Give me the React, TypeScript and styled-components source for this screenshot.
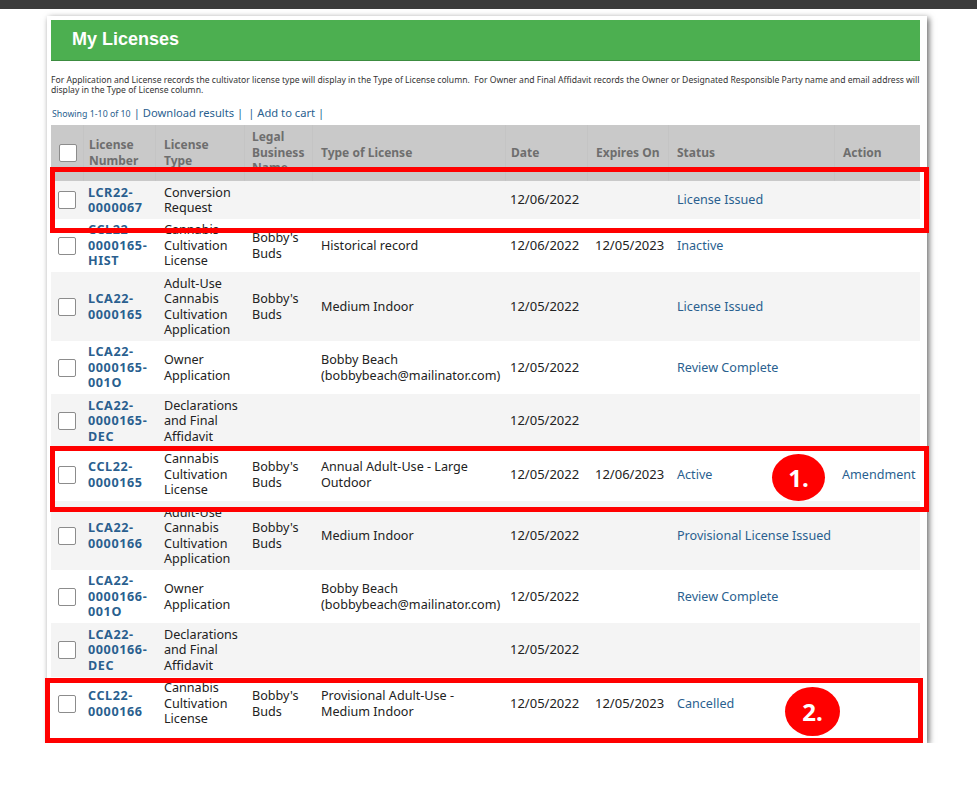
import styled, { createGlobalStyle } from 'styled-components'

const GlobalStyle = createGlobalStyle`
    html, body { margin: 0; padding: 0; background: #fff; }
    body { font-family: "Noto Sans", "Liberation Sans", sans-serif; font-size: 12.6px; color: #222; }
`
const TopBar = styled.div`
    height: 9px;
    background: #3b3b3b;
`
const Card = styled.div`
    position: relative;
    box-sizing: border-box;
    width: 880px;
    margin: 7px 0 0 47px;
    padding: 4px 7px 13px 4px;
    background: #fff;
    box-shadow: 2px 2px 6px rgba(0, 0, 0, 0.6);
`
const Banner = styled.h1`
    box-sizing: border-box;
    height: 41px;
    margin: 0;
    padding-left: 21px;
    background: #4caf50;
    border-bottom: 1px solid #3c8c40;
    color: #fff;
    font: bold 18px/38px "Liberation Sans", Arial, sans-serif;
`
const Note = styled.p`
    margin: 14px 0 0;
    font-size: 8.6px;
    line-height: 10px;
    color: #333;
`
const ResultBar = styled.div`
    display: flex;
    align-items: baseline;
    gap: 5px;
    height: 16px;
    margin: 10px 0 4px 1px;
    color: #2a5f8f;
    font-size: 11.2px;
`
const Showing = styled.span`
    font-size: 8.8px;
    margin-right: -2px;
`
const BarLink = styled.a`
    display: block;
`
const Table = styled.div`
    display: block;
`
const columns = '32px 72px 89px 68px 193px 82px 81px 166px 86px'
const HeadRow = styled.div`
    display: grid;
    grid-template-columns: ${columns};
    height: 56px;
    background: #c9c9c9;
    color: #6e6e6e;
    font-size: 12px;
    font-weight: bold;
    line-height: 15.4px;
`
const HeadCell = styled.div<{ $pad?: number }>`
    display: flex;
    align-items: center;
    overflow: hidden;
    padding-left: ${(p) => p.$pad ?? 8}px;
    padding-bottom: 1px;
    border-left: 1px solid #c4c4c4;
    box-sizing: border-box;
    &:first-child { border-left: 0; }
`
const Row = styled.div<{ $h: number; $odd: boolean }>`
    display: grid;
    grid-template-columns: ${columns};
    height: ${(p) => p.$h}px;
    background: ${(p) => (p.$odd ? '#f4f4f4' : '#fff')};
    line-height: 15.4px;
`
const Cell = styled.div<{ $pad?: number }>`
    display: flex;
    align-items: center;
    box-sizing: border-box;
    padding-left: ${(p) => p.$pad ?? 9}px;
    color: #222;
`
const DateCell = styled(Cell)`
    font-size: 13px;
`
const CheckCell = styled.div<{ $pad?: number }>`
    display: flex;
    align-items: center;
    padding-left: ${(p) => p.$pad ?? 7}px;
`
const Check = styled.span`
    display: block;
    box-sizing: border-box;
    width: 18px;
    height: 18px;
    background: #fff;
    border: 1px solid #8c8c8c;
    border-radius: 2px;
`
const Number = styled.a`
    color: #2a5f8f;
    font-size: 12.6px;
    font-weight: bold;
    letter-spacing: 0.6px;
`
const StatusLink = styled.a`
    color: #2a5f8f;
`
const Highlight = styled.div<{ $x: number; $y: number; $w: number; $h: number }>`
    position: absolute;
    box-sizing: border-box;
    left: ${(p) => p.$x}px;
    top: ${(p) => p.$y}px;
    width: ${(p) => p.$w}px;
    height: ${(p) => p.$h}px;
    border: 5.5px solid #ff0000;
`
const Marker = styled.div<{ $x: number; $y: number; $w: number; $h: number }>`
    position: absolute;
    left: ${(p) => p.$x}px;
    top: ${(p) => p.$y}px;
    width: ${(p) => p.$w}px;
    height: ${(p) => p.$h}px;
    display: flex;
    align-items: center;
    justify-content: center;
    border-radius: 50%;
    background: #ff0000;
    color: #fff;
    font: bold 24px "Open Sans", sans-serif;
`

const rows = [
    { h: 38, no: 'LCR22-\n0000067', type: 'Conversion\nRequest', biz: '', lic: '', date: '12/06/2022', exp: '', status: 'License Issued', action: '' },
    { h: 53, no: 'CCL22-\n0000165-\nHIST', type: 'Cannabis\nCultivation\nLicense', biz: "Bobby's\nBuds", lic: 'Historical record', date: '12/06/2022', exp: '12/05/2023', status: 'Inactive', action: '' },
    { h: 69, no: 'LCA22-\n0000165', type: 'Adult-Use\nCannabis\nCultivation\nApplication', biz: "Bobby's\nBuds", lic: 'Medium Indoor', date: '12/05/2022', exp: '', status: 'License Issued', action: '' },
    { h: 53, no: 'LCA22-\n0000165-\n001O', type: 'Owner\nApplication', biz: '', lic: 'Bobby Beach\n(bobbybeach@mailinator.com)', date: '12/05/2022', exp: '', status: 'Review Complete', action: '' },
    { h: 54, no: 'LCA22-\n0000165-\nDEC', type: 'Declarations\nand Final\nAffidavit', biz: '', lic: '', date: '12/05/2022', exp: '', status: '', action: '' },
    { h: 53, no: 'CCL22-\n0000165', type: 'Cannabis\nCultivation\nLicense', biz: "Bobby's\nBuds", lic: 'Annual Adult-Use - Large\nOutdoor', date: '12/05/2022', exp: '12/06/2023', status: 'Active', action: 'Amendment' },
    { h: 69, no: 'LCA22-\n0000166', type: 'Adult-Use\nCannabis\nCultivation\nApplication', biz: "Bobby's\nBuds", lic: 'Medium Indoor', date: '12/05/2022', exp: '', status: 'Provisional License Issued', action: '' },
    { h: 53, no: 'LCA22-\n0000166-\n001O', type: 'Owner\nApplication', biz: '', lic: 'Bobby Beach\n(bobbybeach@mailinator.com)', date: '12/05/2022', exp: '', status: 'Review Complete', action: '' },
    { h: 54, no: 'LCA22-\n0000166-\nDEC', type: 'Declarations\nand Final\nAffidavit', biz: '', lic: '', date: '12/05/2022', exp: '', status: '', action: '' },
    { h: 53, no: 'CCL22-\n0000166', type: 'Cannabis\nCultivation\nLicense', biz: "Bobby's\nBuds", lic: 'Provisional Adult-Use -\nMedium Indoor', date: '12/05/2022', exp: '12/05/2023', status: 'Cancelled', action: '' },
]

const lines = (text: string) =>
    text.split('\n').map((l, i) => (
        <span key={i}>
            {i > 0 && <br />}
            {l}
        </span>
    ))

function App() {
    return (
        <>
            <GlobalStyle />
            <TopBar />
            <Card>
                <Banner>My Licenses</Banner>
                <Note>
                    For Application and License records the cultivator license type will display in the Type of License column.&nbsp; For Owner and Final Affidavit records the Owner or Designated Responsible Party name and email address will display in the Type of License column.
                </Note>
                <ResultBar>
                    <Showing>Showing 1-10 of 10</Showing>
                    <BarLink>| Download results |</BarLink>
                    <BarLink>| Add to cart |</BarLink>
                </ResultBar>
                <Table>
                    <HeadRow>
                        <CheckCell $pad={8}><Check /></CheckCell>
                        <HeadCell $pad={5}><span>License<br />Number</span></HeadCell>
                        <HeadCell><span>License<br />Type</span></HeadCell>
                        <HeadCell $pad={7}><span>Legal<br />Business<br />Name</span></HeadCell>
                        <HeadCell>Type of License</HeadCell>
                        <HeadCell $pad={5}>Date</HeadCell>
                        <HeadCell>Expires On</HeadCell>
                        <HeadCell>Status</HeadCell>
                        <HeadCell>Action</HeadCell>
                    </HeadRow>
                    {rows.map((r, i) => (
                        <Row key={r.no} $h={r.h} $odd={i % 2 === 0}>
                            <CheckCell><Check /></CheckCell>
                            <Cell $pad={5}><Number>{lines(r.no)}</Number></Cell>
                            <Cell><span>{lines(r.type)}</span></Cell>
                            <Cell $pad={8}><span>{lines(r.biz)}</span></Cell>
                            <Cell><span>{lines(r.lic)}</span></Cell>
                            <DateCell $pad={5}>{r.date}</DateCell>
                            <DateCell $pad={8}>{r.exp}</DateCell>
                            <Cell><StatusLink>{r.status}</StatusLink></Cell>
                            <Cell $pad={8}><StatusLink>{r.action}</StatusLink></Cell>
                        </Row>
                    ))}
                </Table>
                <Highlight $x={3} $y={151} $w={879} $h={66} />
                <Highlight $x={3} $y={430} $w={879} $h={66} />
                <Highlight $x={-2} $y={662} $w={878} $h={65} />
                <Marker $x={725} $y={438} $w={53} $h={47}>1.</Marker>
                <Marker $x={738} $y={671} $w={55} $h={49}>2.</Marker>
            </Card>
        </>
    )
}

export default App
